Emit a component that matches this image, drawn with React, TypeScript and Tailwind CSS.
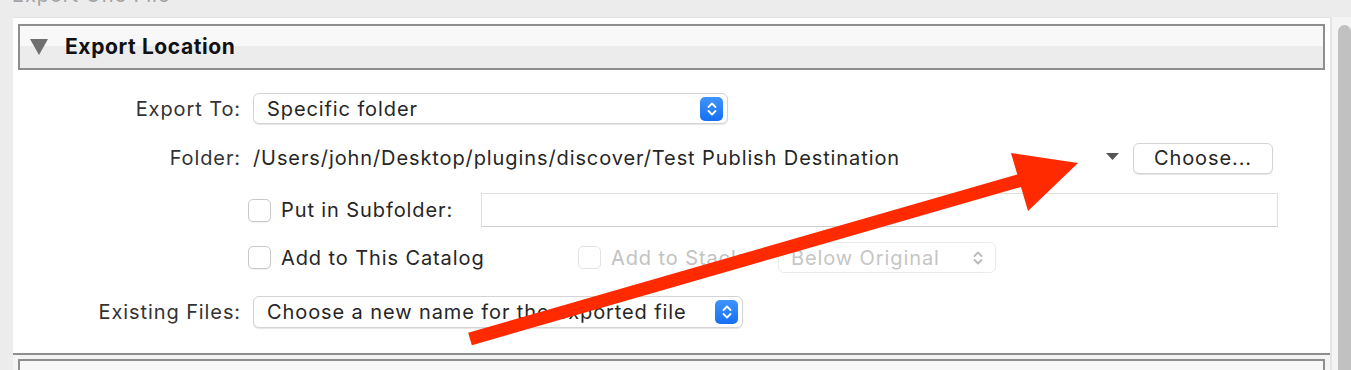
import React from 'react';

const font = { fontFamily: 'Inter, "Noto Sans", sans-serif' };

// blue up/down stepper that sits inside a popup button
const Stepper = ({ disabled }: { disabled?: boolean }) => (
  <div
    className={
      disabled
        ? 'w-[23px] h-[24px] flex items-center justify-center'
        : 'w-[23px] h-[24px] rounded-[5px] bg-[linear-gradient(#3f95fc,#1570f2)] flex items-center justify-center'
    }
  >
    <svg width="10" height="16" viewBox="0 0 10 16" fill="none">
      <path
        d="M1.5 6 L5 2.5 L8.5 6 M1.5 10 L5 13.5 L8.5 10"
        stroke={disabled ? '#b9b9b9' : '#ffffff'}
        strokeWidth="1.8"
        strokeLinecap="round"
        strokeLinejoin="round"
      />
    </svg>
  </div>
);

const Checkbox = ({ disabled }: { disabled?: boolean }) => (
  <div
    className={
      disabled
        ? 'w-[23px] h-[23px] shrink-0 rounded-[5px] border border-[#e3e3e3] bg-white'
        : 'w-[23px] h-[23px] shrink-0 rounded-[5px] border border-[#c9c9c9] bg-white shadow-[0_1px_1px_rgba(0,0,0,0.06)]'
    }
  />
);

const Label = ({ children }: { children: React.ReactNode }) => (
  <div className="w-[228px] shrink-0 text-right text-[#333333]">{children}</div>
);

export default function App() {
  return (
    <div
      className="relative w-[1351px] h-[370px] overflow-hidden bg-[#ececec] text-[20px] tracking-[0.9px] text-[#262626]"
      style={font}
    >
      {/* clipped dialog title */}
      <div className="h-[17px] pl-[12px] -mt-[20px] leading-[30px] text-[#a3a3a3]">Export One File</div>

      <div className="flex mt-[20px] h-[353px]">
        <div className="ml-[13px] w-[1317px] flex flex-col">
          {/* Export Location section */}
          <div className="shrink-0 bg-white h-[336px] pt-[6px] px-[5px] border-t border-[#e2e2e2]">
            <div className="h-[46px] border-2 border-[#8e8e8e] bg-[linear-gradient(#f8f8f8_0%,#f8f8f8_48%,#ececec_48%,#ececec_100%)] flex items-center">
              <svg width="18" height="16" viewBox="0 0 18 16" className="ml-[10px]">
                <polygon points="0,0 18,0 9,16" fill="#707070" />
              </svg>
              <span className="ml-[17px] font-bold text-[#111111] text-[21px] tracking-[0.6px]">Export Location</span>
            </div>

            <div className="mt-[23px] flex flex-col">
              {/* Export To */}
              <div className="h-[31px] flex items-center -ml-[5px]">
                <Label>Export To:</Label>
                <div className="ml-[12px] w-[475px] h-[31px] rounded-[6px] border border-[#d4d4d4] bg-white shadow-[0_1px_1px_rgba(0,0,0,0.1)] flex items-center pl-[13px] pr-[4px]">
                  <span className="flex-1">Specific folder</span>
                  <Stepper />
                </div>
              </div>

              {/* Folder */}
              <div className="mt-[18px] h-[32px] flex items-center -ml-[5px]">
                <Label>Folder:</Label>
                <span className="ml-[12px] w-[853px] shrink-0 whitespace-nowrap">/Users/john/Desktop/plugins/discover/Test Publish Destination</span>
                <svg width="13" height="8" viewBox="0 0 13 8" className="-mt-[2px]">
                  <polygon points="0,0 13,0 6.5,7" fill="#555555" />
                </svg>
                <div className="ml-[14px] w-[140px] h-[31px] rounded-[6px] border border-[#d4d4d4] bg-white shadow-[0_1px_1px_rgba(0,0,0,0.1)] flex items-center justify-center">
                  Choose...
                </div>
              </div>

              {/* Put in Subfolder */}
              <div className="mt-[19px] h-[34px] flex items-center pl-[230px]">
                <Checkbox />
                <span className="ml-[10px] w-[200px] shrink-0 whitespace-nowrap">Put in Subfolder:</span>
                <div className="w-[797px] h-[34px] border border-[#e0e0e0] border-b-[#cfcfcf] bg-white" />
              </div>

              {/* Add to This Catalog */}
              <div className="mt-[15px] h-[31px] flex items-center pl-[230px]">
                <Checkbox />
                <span className="ml-[10px] w-[297px] shrink-0 whitespace-nowrap">Add to This Catalog</span>
                <Checkbox disabled />
                <span className="ml-[10px] w-[167px] shrink-0 whitespace-nowrap text-[#c2c2c2]">Add to Stack:</span>
                <div className="w-[218px] h-[31px] rounded-[6px] border border-[#ebebeb] bg-white flex items-center pl-[12px] pr-[6px] text-[#c6c6c6]">
                  <span className="flex-1 whitespace-nowrap">Below Original</span>
                  <Stepper disabled />
                </div>
              </div>

              {/* Existing Files */}
              <div className="mt-[23px] h-[32px] flex items-center -ml-[5px]">
                <Label>Existing Files:</Label>
                <div className="ml-[12px] w-[490px] h-[32px] rounded-[6px] border border-[#d4d4d4] bg-white shadow-[0_1px_1px_rgba(0,0,0,0.1)] flex items-center pl-[13px] pr-[4px]">
                  <span className="flex-1 whitespace-nowrap">Choose a new name for the exported file</span>
                  <Stepper />
                </div>
              </div>
            </div>
          </div>

          {/* next section, cut off */}
          <div className="shrink-0 h-[40px] border-t-2 border-[#8e8e8e] bg-[#f4f4f4] pt-[4px] px-[5px]">
            <div className="h-[40px] border-2 border-[#8e8e8e] bg-[#f8f8f8]" />
          </div>
        </div>

        {/* scrollbar */}
        <div className="w-[21px] flex border-l-2 border-[#e4e4e4] bg-[#f4f4f4]">
          <div className="ml-[6px] mt-[8px] w-[13px] h-[400px] rounded-t-full bg-[#c1c1c1]" />
        </div>
      </div>

      {/* annotation arrow */}
      <svg className="absolute left-0 top-0 pointer-events-none" width="1351" height="370">
        <line x1="470" y1="339" x2="1032" y2="177" stroke="#ff2a00" strokeWidth="13" />
        <polygon points="1011,153 1078,163 1028,211" fill="#ff2a00" />
      </svg>
    </div>
  );
}
